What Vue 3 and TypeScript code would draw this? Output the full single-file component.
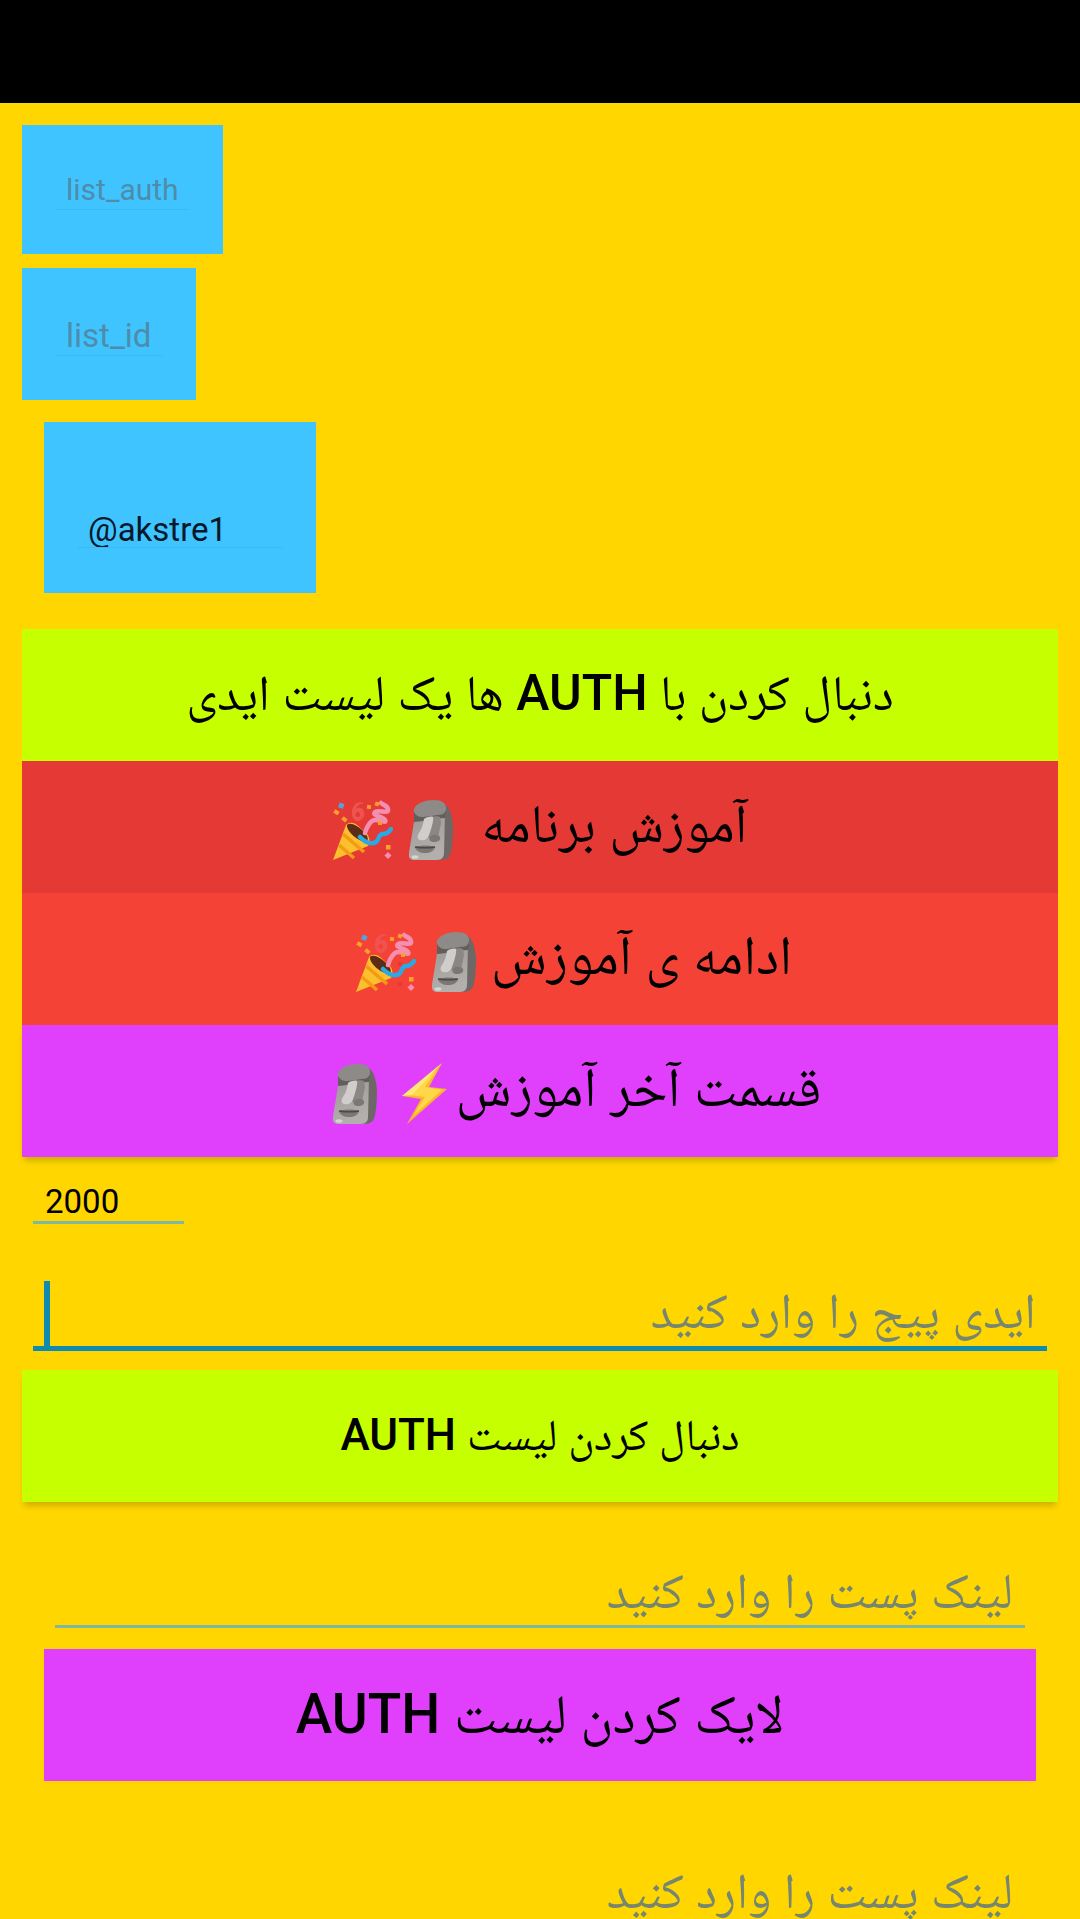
<script setup lang="ts">
const pageTitle = 'AUTH'
</script>

<template>
  <div class="page">
    <div class="status"></div>
    <main class="content">
      <label class="chip chip-auth"><input class="chip-input auth-input" placeholder="list_auth" /></label>
      <label class="chip chip-id"><input class="chip-input" placeholder="list_id" /></label>
      <label class="chip chip-user"><input class="chip-input user-input" value="@akstre1" /></label>

      <div class="stack">
        <button class="btn lime big" dir="rtl"><span class="label">دنبال کردن با <span class="latin">{{ pageTitle }}</span> ها یک لیست ایدی</span></button>
        <button class="btn red1" dir="rtl">
          <span class="label">آموزش برنامه</span>
          <span class="emojis">
            <svg class="moai" viewBox="0 0 44 60"><use href="#moai" /></svg>
            <svg class="party" viewBox="0 0 60 60"><use href="#party" /></svg>
          </span>
        </button>
        <button class="btn red2 near" dir="rtl">
          <span class="label">ادامه ی آموزش</span>
          <span class="emojis">
            <svg class="moai" viewBox="0 0 44 60"><use href="#moai" /></svg>
            <svg class="party" viewBox="0 0 60 60"><use href="#party" /></svg>
          </span>
        </button>
        <button class="btn violet shadow near last-step" dir="rtl">
          <span class="label">قسمت آخر آموزش</span>
          <span class="emojis wide">
            <svg class="bolt" viewBox="0 0 46 62"><use href="#bolt" /></svg>
            <svg class="moai" viewBox="0 0 44 60"><use href="#moai" /></svg>
          </span>
        </button>
      </div>

      <input class="count" value="2000" />

      <div class="page-id">
        <input class="field field-focus" dir="rtl" placeholder="ایدی پیج را وارد کنید" />
        <span class="caret"></span>
      </div>

      <button class="btn lime shadow small" dir="rtl"><span class="label">دنبال کردن لیست <span class="latin">{{ pageTitle }}</span></span></button>

      <input class="field field-post" dir="rtl" placeholder="لینک پست را وارد کنید" />

      <button class="btn violet inset" dir="rtl"><span class="label">لایک کردن لیست <span class="latin">{{ pageTitle }}</span></span></button>

      <input class="field field-post last" dir="rtl" placeholder="لینک پست را وارد کنید" />
    </main>

    <svg class="defs" width="0" height="0" aria-hidden="true">
      <defs>
        <linearGradient id="stone" x1="0" y1="0" x2="0.3" y2="1">
          <stop offset="0" stop-color="#9b9795" />
          <stop offset="1" stop-color="#b3afad" />
        </linearGradient>
        <symbol id="moai" viewBox="0 0 44 60">
          <path d="M10 5C16 0 30 0 36 4c5 4 7 11 8 22 0 12-1 23-3 29-2 4-6 5-11 5H8z" fill="#6d6866" />
          <path d="M6 12C5 24 2 40 0 53c-1 5 2 7 6 7h22c5 0 7-3 7-7l1-40z" fill="url(#stone)" />
          <path d="M5 9C7 3 17 0 25 0c8 0 12 3 12 8 0 5-3 7-9 7l-16 2C7 17 4 14 5 9z" fill="#8e8a88" />
          <path d="M5 12c2 4 5 5 9 5l14-2c4 0 7-1 9-4l-1 7-14 1-8 2-9 1z" fill="#625e5c" />
          <path d="M22 17c3-1 7-1 9 0l1 6-3 15H19z" fill="#8b8785" />
          <path d="M15 19c2-2 7-3 9-2 1 3-2 13-4 18-1 4-5 6-9 5-3-1-3-4-1-7 3-4 4-9 5-14z" fill="#d0cdcc" />
          <path d="M21 37c2-3 8-3 10 0 1 3-2 5-6 5-3 0-6-2-4-5z" fill="#7b7775" />
          <path d="M6 47c6-2 15-2 20 0-1 4-5 6-10 6-5 0-9-2-10-6z" fill="#7b7775" />
          <path d="M6 47c6 1 14 1 20 0" fill="none" stroke="#4d4947" stroke-width="1.5" />
          <ellipse cx="6" cy="57" rx="3.5" ry="1.8" fill="#d7d4d3" />
        </symbol>
        <symbol id="party" viewBox="0 0 60 60">
          <path d="M25 21c-1 0-2 0-3-1-5-3-4-14 2-17 4-2 7 0 7 1-3-1-7 1-8 5 2-2 7-2 8 3 1 4-1 8-6 9zm0-9c-2 0-3 2-2 4 1 2 4 1 4-1 0-2-1-3-2-3z" fill="#ef5350" />
          <path d="M0 60l13-35c3-3 7-3 11 0l10 9c3 4 3 8 1 12z" fill="#fbc02d" />
          <path d="M6 45l15 13M10 34l21 18" stroke="#f59a13" stroke-width="3.5" fill="none" />
          <path d="M14 25c4-4 15 3 20 11 2 4 0 6-4 5-7-1-17-11-16-16z" fill="#5d2c17" />
          <path d="M32 33C34 26 38 20 42 20c6 0 12 4 10 0-2-4-14-4-10-8 4-3 14 3 13-3-1-4-5-4-7-6" fill="none" stroke="#f48fb1" stroke-width="4.5" stroke-linecap="round" />
          <path d="M27 37c5 5 11 8 16 5 4-3 2-8 7-8 4 0 6-2 8-5" fill="none" stroke="#29a9e6" stroke-width="4.5" stroke-linecap="round" />
          <rect x="6" y="3" width="5" height="5" fill="#4fa6dd" transform="rotate(20 8 5)" />
          <rect x="1" y="10" width="5" height="4" fill="#f7a12a" transform="rotate(30 3 12)" />
          <rect x="9" y="17" width="5" height="4" fill="#f7a12a" transform="rotate(40 11 19)" />
          <rect x="34" y="5" width="4" height="4" fill="#f7a12a" transform="rotate(10 36 7)" />
          <rect x="42" y="2" width="4" height="4" fill="#f7a12a" transform="rotate(20 44 4)" />
          <rect x="42" y="30" width="4" height="4" fill="#e53935" />
          <rect x="45" y="21" width="4" height="4" fill="#f7a12a" />
          <rect x="42" y="50" width="4" height="4" fill="#e53935" />
          <rect x="53" y="45" width="4.5" height="4.5" fill="#f7a12a" />
          <rect x="52.5" y="53" width="5" height="5" fill="#f48fb1" transform="rotate(45 55 55.5)" />
        </symbol>
        <symbol id="bolt" viewBox="0 0 46 62">
          <path d="M41 0L1 33l19 3L6 61l40-35-18-2z" fill="#fbb62c" />
          <path d="M36 7L7 32l17 2-12 19 29-26-17-3z" fill="#ffd84a" />
          <path d="M41 0L1 33l10-1L28 14z" fill="#ffe97a" />
        </symbol>
      </defs>
    </svg>
  </div>
</template>

<style scoped>
.page {
  width: 1080px;
  height: 1919px;
  overflow: hidden;
  background: #ffd600;
  font-family: Roboto, "Noto Naskh Arabic", "Noto Sans Arabic", "DejaVu Sans", sans-serif;
  color: #000;
}
.status {
  height: 103px;
  background: #000;
}
.content {
  display: flex;
  flex-direction: column;
  align-items: flex-start;
  padding-top: 22px;
}
.chip {
  display: flex;
  background: #40c4ff;
  box-sizing: border-box;
}
.chip-auth {
  width: 201px;
  height: 129px;
  margin-left: 22px;
  padding: 39px 34px 44px 33px;
}
.chip-id {
  width: 174px;
  height: 132px;
  margin: 14px 0 0 22px;
  padding: 42px 33px 44px;
}
.chip-user {
  width: 272px;
  height: 171px;
  margin: 22px 0 0 44px;
  padding: 80px 33px 45px 34px;
}
.chip-input {
  box-sizing: border-box;
  width: 100%;
  min-width: 0;
  height: 46px;
  border: 0;
  border-bottom: 1px solid rgba(0, 60, 110, 0.08);
  outline: 0;
  padding: 6px 11px 0;
  background: transparent;
  font: 33px Roboto, sans-serif;
  color: #000;
}
.auth-input {
  font-size: 30px;
}
.chip-input::placeholder {
  color: #4d8dab;
  opacity: 1;
}
.user-input {
  padding: 10px 10px 0;
  color: #06182a;
}
.stack {
  display: flex;
  flex-direction: column;
  width: 100%;
  margin-top: 36px;
}
.btn {
  display: flex;
  align-items: center;
  justify-content: center;
  gap: 29px;
  flex: none;
  width: 1036px;
  height: 132px;
  margin-left: 22px;
  border: 0;
  padding: 0;
  color: #000;
  font-family: inherit;
  font-size: 55px;
}
.near {
  gap: 15px;
  padding-left: 68px;
}
.last-step {
  gap: 9px;
  padding-left: 74px;
}
.label {
  display: block;
  margin-top: 5px;
}
.latin { font-weight: 500; }
.lime { background: #c6ff00; }
.red1 { background: #e53935; font-size: 54px; }
.red2 { background: #f44336; }
.violet { background: #e040fb; }
.shadow { box-shadow: 0 6px 6px -2px rgba(0, 0, 0, 0.18); }
.big { font-size: 50px; }
.small { font-size: 44px; margin-top: 19px; }
.big .label, .small .label { margin-top: 8px; }
.inset { width: 992px; margin: 21px 0 0 44px; }
.inset .label { margin-top: 12px; }
.emojis {
  display: flex;
  align-items: center;
  gap: 16px;
  margin-top: 6px;
}
.emojis.wide { gap: 24px; }
.moai { width: 44px; height: 60px; display: block; }
.party { width: 60px; height: 60px; display: block; }
.bolt { width: 46px; height: 62px; display: block; }
.count {
  box-sizing: border-box;
  width: 151px;
  height: 42px;
  margin: 25px 0 0 33px;
  border: 0;
  border-bottom: 3px solid #7fb8a0;
  outline: 0;
  padding: 0 12px;
  background: transparent;
  font: 33px Roboto, sans-serif;
  color: #000;
}
.field {
  box-sizing: border-box;
  border: 0;
  outline: 0;
  background: transparent;
  font-family: inherit;
  font-size: 50px;
  color: #000;
}
.field::placeholder {
  color: #76866f;
  opacity: 1;
}
.page-id {
  position: relative;
  width: 1014px;
  margin: 52px 0 0 33px;
}
.field-focus {
  display: block;
  width: 100%;
  height: 75px;
  border-bottom: 5px solid #0f8bb0;
  padding: 0 11px;
}
.caret {
  position: absolute;
  left: 11px;
  top: 5px;
  width: 6px;
  height: 70px;
  background: #0f8bb0;
}
.field-post {
  width: 970px;
  height: 72px;
  margin: 54px 0 0 55px;
  border-bottom: 3px solid #7fb8a0;
  padding: 0 12px;
}
.last {
  margin-top: 75px;
  border-bottom-color: transparent;
}
.defs {
  position: absolute;
}
</style>
